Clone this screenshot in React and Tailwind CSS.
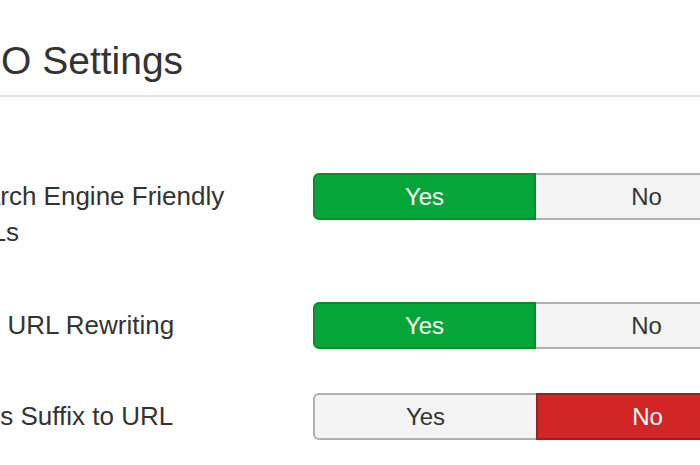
import React from "react";

const rows = [
  { label: ["Search Engine Friendly", "URLs"], value: "yes" },
  { label: ["Use URL Rewriting"], value: "yes" },
  { label: ["Adds Suffix to URL"], value: "no" },
];

function Toggle({ value }) {
  const yesOn = value === "yes";
  return (
    <div className="flex w-[446px] h-[47px] shrink-0 text-[24px]">
      <button
        className={`w-1/2 rounded-l-[6px] border-2 ${
          yesOn
            ? "bg-[#04a63a] border-[#0b8b31] text-white"
            : "bg-[#f3f3f3] border-[#b0b0b0] border-r-0 text-[#333]"
        }`}
      >
        Yes
      </button>
      <button
        className={`w-1/2 rounded-r-[6px] border-2 ${
          yesOn
            ? "bg-[#f3f3f3] border-[#b0b0b0] border-l-0 text-[#333]"
            : "bg-[#d12526] border-[#a01d1f] text-white"
        }`}
      >
        No
      </button>
    </div>
  );
}

export default function App() {
  return (
    <div
      className="w-[700px] h-[465px] overflow-hidden bg-white text-[#333]"
      style={{ fontFamily: '"Liberation Sans", Arial, sans-serif' }}
    >
      {/* Page header */}
      <div className="pt-[37px] pb-[11px] border-b-2 border-[#e5e5e5]">
        <h1 className="-ml-[51px] text-[39px] leading-[47px] font-normal whitespace-nowrap">
          SEO Settings
        </h1>
      </div>

      {/* Options */}
      <div className="-ml-[46px] pt-[76px]">
        {rows.map((row, i) => (
          <div
            key={i}
            className={`flex items-start ${i === 1 ? "mt-[52px]" : ""} ${i === 2 ? "mt-[44px]" : ""}`}
          >
            <div className="w-[359px] shrink-0 mt-[5px] text-[26px] leading-[36px]">
              {row.label.map((line, j) => (
                <div key={j} className="whitespace-nowrap">
                  {line}
                </div>
              ))}
            </div>
            <Toggle value={row.value} />
          </div>
        ))}
      </div>
    </div>
  );
}
